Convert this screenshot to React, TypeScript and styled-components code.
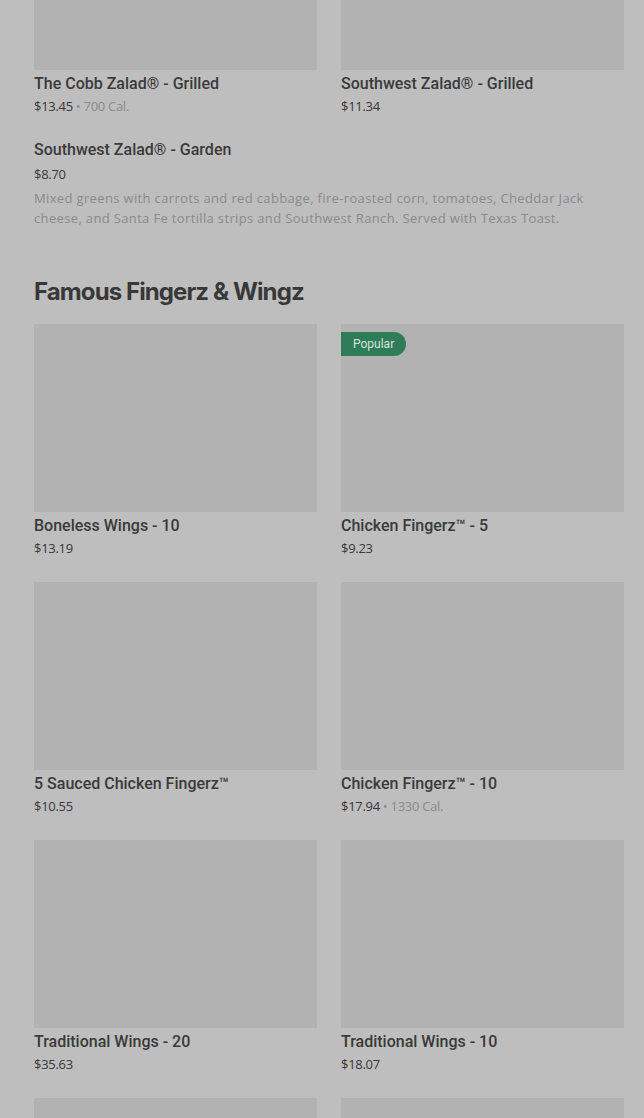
import styled, { createGlobalStyle } from "styled-components";

const GlobalStyle = createGlobalStyle`
    body {
        margin: 0;
        background: #bebebe;
        font-family: Roboto, "Noto Sans", "Liberation Sans", sans-serif;
        overflow: hidden;
    }
`;

const Page = styled.div`
    padding: 0 20px 0 34px;
    margin-top: -118px;
`;

const Grid = styled.div`
    display: grid;
    grid-template-columns: 1fr 1fr;
    column-gap: 24px;
    row-gap: 24px;
`;

const Card = styled.div`
    display: flex;
    flex-direction: column;
`;

const ImageBox = styled.div`
    position: relative;
    height: 188px;
    background: #b2b2b2;
    margin-bottom: 4px;
`;

const Badge = styled.span`
    position: absolute;
    top: 8px;
    left: 0;
    height: 24px;
    padding: 0 12px;
    display: flex;
    align-items: center;
    background: #2f7c58;
    color: #d6e4dc;
    font-size: 12px;
    border-radius: 0 12px 12px 0;
`;

const ItemName = styled.div`
    font-size: 16px;
    line-height: 20px;
    font-weight: 500;
    color: #3a3a3a;
`;

const Meta = styled.div<{ $gap?: number }>`
    margin-top: ${(props) => props.$gap ?? 2}px;
    font-family: "Open Sans", Roboto, sans-serif;
    font-size: 13px;
    line-height: 20px;
    letter-spacing: -0.3px;
    color: #383838;
`;

const Cal = styled.span`
    color: #8a8a8a;
`;

const Row = styled.div`
    margin-top: 24px;
`;

const Desc = styled.p`
    margin: 4px 0 0;
    max-width: 590px;
    font-family: "Open Sans", Roboto, sans-serif;
    font-size: 13px;
    line-height: 20px;
    letter-spacing: 0.35px;
    color: #8a8a8a;
`;

const Heading = styled.h2`
    margin: 48px 0 16px;
    font-family: Inter, "Liberation Sans", sans-serif;
    font-size: 24px;
    line-height: 32px;
    font-weight: 700;
    letter-spacing: -0.9px;
    color: #383838;
`;

interface IItem {
    name: string;
    price: string;
    cal?: string;
    popular?: boolean;
}

const salads: IItem[] = [
    { name: "The Cobb Zalad® - Grilled", price: "$13.45", cal: "700 Cal." },
    { name: "Southwest Zalad® - Grilled", price: "$11.34" },
];

const wings: IItem[] = [
    { name: "Boneless Wings - 10", price: "$13.19" },
    { name: "Chicken Fingerz™ - 5", price: "$9.23", popular: true },
    { name: "5 Sauced Chicken Fingerz™", price: "$10.55" },
    { name: "Chicken Fingerz™ - 10", price: "$17.94", cal: "1330 Cal." },
    { name: "Traditional Wings - 20", price: "$35.63" },
    { name: "Traditional Wings - 10", price: "$18.07" },
    { name: "", price: "" },
    { name: "", price: "" },
];

function ItemCard({ item }: { item: IItem }) {
    return (
        <Card>
            <ImageBox>{item.popular && <Badge>Popular</Badge>}</ImageBox>
            <ItemName>{item.name}</ItemName>
            <Meta>
                {item.price}
                {item.cal && <Cal> • {item.cal}</Cal>}
            </Meta>
        </Card>
    );
}

function App() {
    return (
        <Page>
            <GlobalStyle />
            <Grid>
                {salads.map((s) => (
                    <ItemCard key={s.name} item={s} />
                ))}
            </Grid>
            <Row>
                <ItemName>Southwest Zalad® - Garden</ItemName>
                <Meta $gap={4}>$8.70</Meta>
                <Desc>
                    Mixed greens with carrots and red cabbage, fire-roasted corn, tomatoes, Cheddar Jack
                    cheese, and Santa Fe tortilla strips and Southwest Ranch. Served with Texas Toast.
                </Desc>
            </Row>
            <Heading>Famous Fingerz &amp; Wingz</Heading>
            <Grid>
                {wings.map((w, i) => (
                    <ItemCard key={i} item={w} />
                ))}
            </Grid>
        </Page>
    );
}

export default App;
